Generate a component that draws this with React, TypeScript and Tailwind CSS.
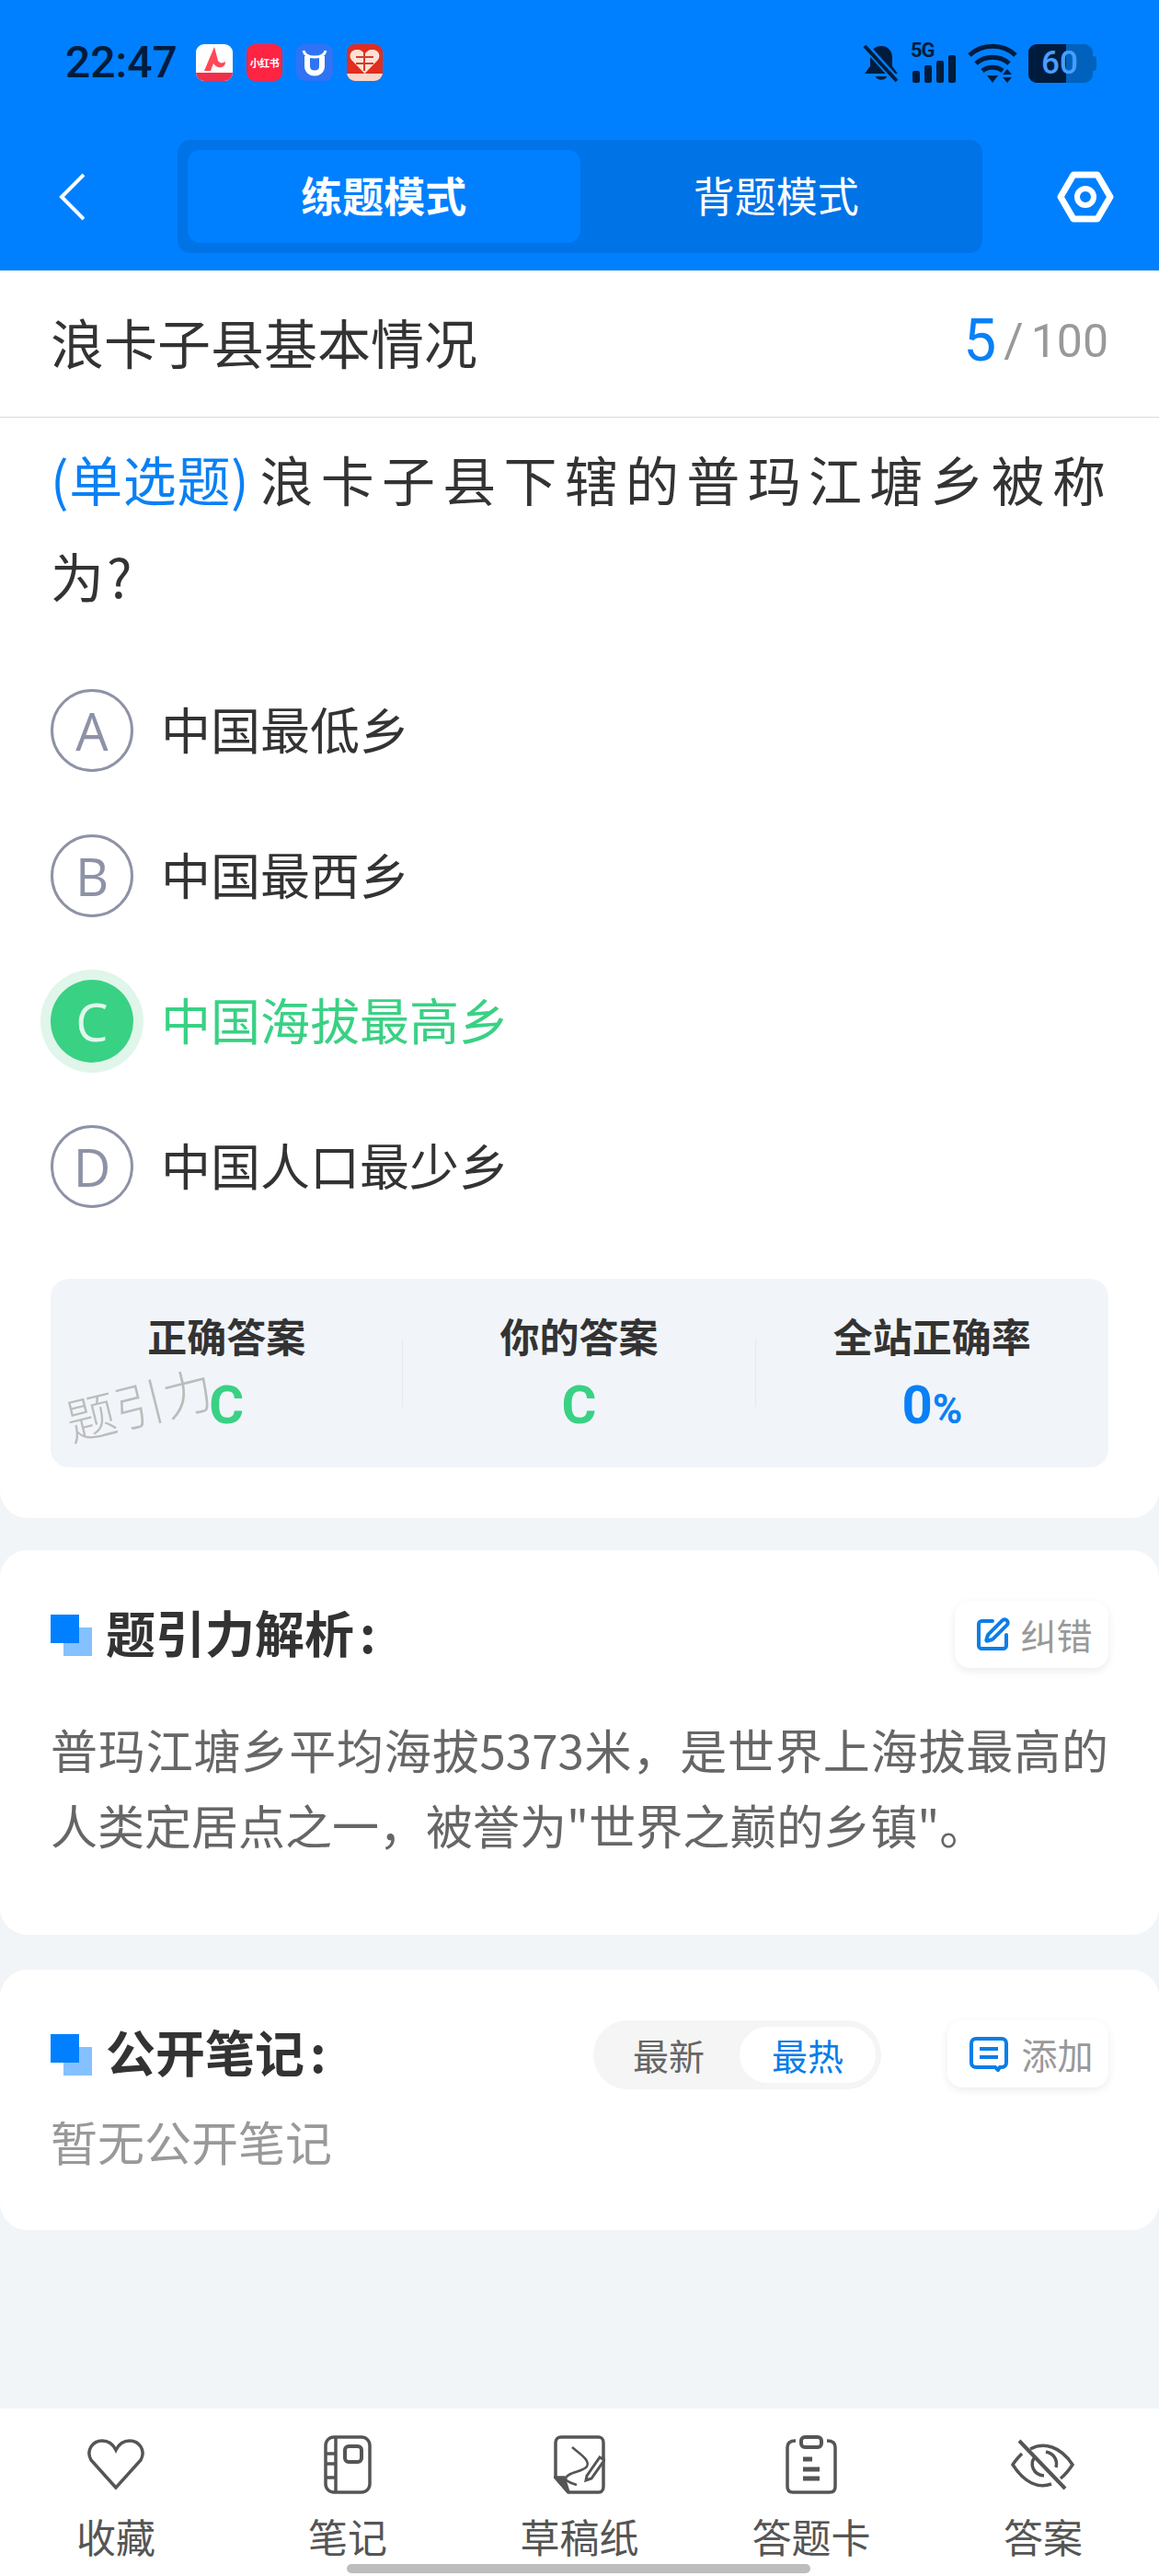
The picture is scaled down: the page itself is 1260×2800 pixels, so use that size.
import { SquarePen } from 'lucide-react';

const options = [
  { key: 'A', text: '中国最低乡' },
  { key: 'B', text: '中国最西乡' },
  { key: 'C', text: '中国海拔最高乡', correct: true },
  { key: 'D', text: '中国人口最少乡' },
];

const stats = [
  { label: '正确答案', value: 'C', color: 'text-[#39d184]' },
  { label: '你的答案', value: 'C', color: 'text-[#39d184]' },
  { label: '全站正确率', value: '0', unit: '%', color: 'text-[#0a80f5]' },
];

// full-width commas written as escapes
const analysis = '普玛江塘乡平均海拔5373米\uFF0C是世界上海拔最高的人类定居点之一\uFF0C被誉为"世界之巅的乡镇"\u3002';

function StatusIcons() {
  return (
    <div className="flex items-center">
      <svg width="40" height="44" viewBox="0 0 40 44" className="mr-[12px]">
        <path d="M20 3c-8 0-12 6-12 13v9l-6 8h36l-6-8v-9c0-7-4-13-12-13z" fill="#001c3d" />
        <path d="M14 36h12c-1 5-11 5-12 0z" fill="#001c3d" />
        <path d="M2 2l36 40" stroke="#0080ff" strokeWidth="8" />
        <path d="M2 3l35 38" stroke="#001c3d" strokeWidth="4" />
      </svg>
      <div className="relative w-[50px] h-[44px] mr-[12px]">
        <span className="absolute left-0 top-[-3px] font-['Roboto'] text-[22px] leading-[22px] font-bold tracking-[-1px] text-[#001c3d]">5G</span>
        <svg width="50" height="44" viewBox="0 0 50 44" className="absolute left-0 top-0">
          <rect x="2" y="30" width="8" height="13" rx="2" fill="#001c3d" />
          <rect x="15" y="24" width="8" height="19" rx="2" fill="#001c3d" />
          <rect x="28" y="19" width="8" height="24" rx="2" fill="#001c3d" />
          <rect x="41" y="13" width="8" height="30" rx="2" fill="#001c3d" />
        </svg>
      </div>
      <svg width="54" height="44" viewBox="0 0 54 44" className="mr-[12px]">
        <path d="M2 13c14-13 36-13 50 0" fill="none" stroke="#001c3d" strokeWidth="5" />
        <path d="M9 22c10-9 26-9 36 0" fill="none" stroke="#001c3d" strokeWidth="5" />
        <path d="M16 30c6-5 16-5 22 0" fill="none" stroke="#001c3d" strokeWidth="5" />
        <path d="M21 35h12l-6 8z" fill="#001c3d" />
        <path d="M43 28l5 6h-10zM43 43l5-6h-10z" fill="#001c3d" />
      </svg>
      <div className="flex items-center">
        <div className="relative flex h-[42px] w-[70px] overflow-hidden rounded-[9px] bg-[#0062bd]">
          <div className="h-full w-[41px] bg-[#001c3d]" />
          <span className="absolute left-[14px] top-0 font-['Roboto'] text-[35px] leading-[42px] font-medium text-[#4a9eff]">60</span>
        </div>
        <div className="h-[16px] w-[4px] rounded-r-[3px] bg-[#0062bd]" />
      </div>
    </div>
  );
}

function AppIcons() {
  return (
    <div className="flex items-center gap-[15px]">
      <div className="relative h-[40px] w-[40px] overflow-hidden rounded-[9px] bg-white">
        <svg width="40" height="40" viewBox="0 0 40 40" className="absolute left-0 top-0">
          <path d="M20 3L9 29h7l3-8c3 4 6 5 9 4 3-1 4-3 4-6-3 2-6 2-8-1L20 3z" fill="#ff4757" />
          <rect x="0" y="31" width="40" height="9" fill="#f0304a" />
        </svg>
      </div>
      <div className="flex h-[40px] w-[39px] items-center justify-center rounded-[9px] bg-[#ff2442]">
        <span className="whitespace-nowrap text-[11px] font-bold leading-none tracking-[-0.5px] text-white">小红书</span>
      </div>
      <div className="h-[40px] w-[40px] rounded-[9px] bg-[#2e74f5]">
        <svg width="40" height="40" viewBox="0 0 40 40">
          <path d="M12 13v11c0 10 16 10 16 0V13" fill="none" stroke="white" strokeWidth="6" />
          <path d="M8 7c1 5 5 7 12 7s11-2 12-7" fill="none" stroke="white" strokeWidth="3" />
        </svg>
      </div>
      <div className="h-[40px] w-[39px] overflow-hidden rounded-[9px] bg-[#e02e1f]">
        <svg width="39" height="40" viewBox="0 0 39 40">
          <path d="M19.5 32L5 17c-4-6 1-12 7-11 3 0 6 2 7.5 5C21 8 24 6 27 6c6-1 11 5 7 11z" fill="#fbe3d6" />
          <path d="M19 9v20M10 14h19M10 21h19" stroke="#d93a2b" strokeWidth="2" />
          <rect x="0" y="32" width="39" height="8" fill="#fbd5c8" />
        </svg>
      </div>
    </div>
  );
}

function SectionMark() {
  return (
    <div className="relative h-[45px] w-[45px] shrink-0">
      <div className="absolute left-[14px] top-[14px] h-[31px] w-[31px] bg-[#85c1ff]" />
      <div className="absolute left-0 top-0 h-[31px] w-[31px] bg-[#0080ff]" />
    </div>
  );
}

function NavIcon({ name }: { name: string }) {
  if (name === 'heart') {
    return (
      <svg width="64" height="56" viewBox="0 0 64 56" fill="none" stroke="#555" strokeWidth="3.5">
        <path d="M32 53L5 23C-1 12 7 2 17 2c7 0 12 4 15 10C35 6 40 2 47 2c10 0 18 10 12 21z" />
      </svg>
    );
  }
  if (name === 'note') {
    return (
      <svg width="52" height="64" viewBox="0 0 52 64" fill="none" stroke="#555" strokeWidth="3.5">
        <rect x="2" y="2" width="48" height="60" rx="9" />
        <path d="M13 2v60M2 20h11M2 31h11M2 46h11" />
        <rect x="23" y="12" width="18" height="17" rx="4" strokeWidth="4" />
      </svg>
    );
  }
  if (name === 'draft') {
    return (
      <svg width="56" height="64" viewBox="0 0 56 64" fill="none" stroke="#555" strokeWidth="3.5">
        <path d="M2 46V8c0-3 2-6 6-6h41c3 0 5 3 5 6v48c0 3-2 6-5 6H16z" />
        <path d="M2 46h9l5 16z" fill="#555" />
        <path d="M20 13c8 7 20 14 16 21-4 6-22 6-23 13 0 3 6 5 12 7" strokeWidth="2.5" />
        <path d="M36 44l14-20 5 3-14 20-6 2z" fill="#fff" strokeWidth="3" />
      </svg>
    );
  }
  if (name === 'card') {
    return (
      <svg width="56" height="64" viewBox="0 0 56 64" fill="none" stroke="#555" strokeWidth="3.5">
        <path d="M11 6C5 6 2 8 2 13v43c0 4 2 6 6 6h40c4 0 6-2 6-6V13c0-5-3-7-9-7" />
        <rect x="17" y="2" width="22" height="11" rx="4" strokeWidth="4" />
        <path d="M19 26h10M19 37h18M19 47h18" strokeWidth="5" />
      </svg>
    );
  }
  return (
    <svg width="70" height="56" viewBox="0 0 70 56" fill="none" stroke="#555" strokeWidth="3.5">
      <path d="M21 11c15-8 33-3 46 17-4 6-8 11-13 15M44 49c-14 5-29-1-42-21 3-5 7-9 10-12" />
      <path d="M26 20c-6 7-2 19 10 20M38 14c9 2 13 9 11 17" />
      <path d="M9 2l50 52" strokeWidth="4" />
    </svg>
  );
}

export default function App() {
  return (
    <div className="relative flex h-[2800px] w-[1260px] flex-col overflow-hidden bg-[#f2f5f8] font-['Noto_Sans_CJK_SC',sans-serif]">
      <header className="h-[294px] shrink-0 bg-[#0080ff]">
        <div className="flex h-[152px] items-start justify-between pl-[71px] pr-[68px] pt-[47px]">
          <div className="flex items-center">
            <span className="w-[142px] font-['Roboto'] text-[48px] leading-[42px] font-medium text-[#001c3d]">22:47</span>
            <AppIcons />
          </div>
          <StatusIcons />
        </div>
        <div className="flex h-[123px] items-center">
          <svg width="28" height="52" viewBox="0 0 28 52" fill="none" className="ml-[64px] mr-[101px]">
            <path d="M27 2L3 26l24 24" stroke="white" strokeWidth="4" />
          </svg>
          <div className="flex h-[123px] w-[875px] rounded-[14px] bg-[#0073e6] p-[11px]">
            <div className="flex flex-1 items-center justify-center rounded-[14px] bg-[#0080ff] pb-[3px] text-[45px] font-bold text-white">练题模式</div>
            <div className="flex flex-1 items-center justify-center pb-[3px] text-[45px] text-white">背题模式</div>
          </div>
          <svg width="62" height="56" viewBox="0 0 62 56" fill="none" className="ml-[81px]">
            <path d="M4 28L18 4h26l14 24-14 24H18z" stroke="white" strokeWidth="7" strokeLinejoin="round" />
            <circle cx="31" cy="28" r="9" stroke="white" strokeWidth="6" />
          </svg>
        </div>
      </header>

      <section className="shrink-0 rounded-b-[30px] bg-white pb-[55px]">
        <div className="flex h-[160px] items-center justify-between border-b border-[#d9d9d9] px-[55px] pb-[5px]">
          <span className="text-[58px] text-[#333]">浪卡子县基本情况</span>
          <div className="flex items-center font-['Roboto']">
            <span className="text-[64px] text-[#0a80f5]">5</span>
            <span className="ml-[8px] text-[52px] text-[#999]">/</span>
            <span className="ml-[8px] text-[50px] text-[#999]">100</span>
          </div>
        </div>

        <p className="px-[55px] pt-[14px] text-justify text-[58px] leading-[105px] tracking-[3px] text-[#333]">
          <span className="mr-[6px] inline-block tracking-[0.6px] text-[#0a80f5]">(单选题)</span>浪卡子县下辖的普玛江塘乡被称为?
        </p>

        <div className="px-[55px] pt-[71px]">
          {options.map(option => (
            <div key={option.key} className="flex h-[158px] items-start">
              {option.correct ? (
                <div className="flex h-[90px] w-[90px] shrink-0 items-center justify-center rounded-full bg-[#39d184] font-['Open_Sans'] text-[56px] text-[#e0f8ec] shadow-[0_0_0_11px_#e0f6ea]">
                  {option.key}
                </div>
              ) : (
                <div className="flex h-[90px] w-[90px] shrink-0 items-center justify-center rounded-full border-[3px] border-[#8e92a6] font-['Open_Sans'] text-[56px] text-[#8e92a6]">
                  {option.key}
                </div>
              )}
              <span
                className={
                  option.correct
                    ? 'ml-[30px] text-[54px] leading-[86px] text-[#39d184]'
                    : 'ml-[30px] text-[54px] leading-[86px] text-[#333]'
                }
              >
                {option.text}
              </span>
            </div>
          ))}
        </div>

        <div className="relative mx-[55px] mt-[9px] flex h-[205px] rounded-[20px] bg-[#f1f5f9]">
          {stats.map((stat, i) => (
            <div key={stat.label} className="flex flex-1 items-start">
              <div className="flex flex-1 flex-col items-center pt-[31px]">
                <span className="text-[43px] leading-[60px] font-bold text-[#333]">{stat.label}</span>
                <span className={`mt-[13px] font-['Roboto'] text-[58px] leading-[66px] font-bold ${stat.color}`}>
                  {stat.value}
                  {stat.unit && <span className="text-[44px]">{stat.unit}</span>}
                </span>
              </div>
              {i < 2 && <div className="mt-[65px] h-[74px] w-px bg-[#e6e9ed]" />}
            </div>
          ))}
          <span className="absolute left-[15px] top-[108px] -rotate-[14deg] text-[54px] font-light leading-none text-[#bcbcbc]">题引力</span>
        </div>
      </section>

      <section className="mt-[35px] h-[418px] shrink-0 rounded-[30px] bg-white px-[55px] pt-[55px]">
        <div className="flex items-start justify-between">
          <div className="mt-[15px] flex items-start">
            <SectionMark />
            <span className="ml-[15px] mt-[-21px] text-[54px] leading-[80px] font-bold text-[#333]">题引力解析<span className="ml-[6px]">:</span></span>
          </div>
          <div className="flex h-[73px] w-[167px] items-center justify-center gap-[10px] rounded-[16px] bg-white pl-[4px] shadow-[0_3px_10px_rgba(0,0,0,0.08)]">
            <SquarePen size={40} color="#0a7de8" strokeWidth={2.4} />
            <span className="text-[39px] text-[#999]">纠错</span>
          </div>
        </div>
        <p className="mt-[46px] text-justify text-[51px] leading-[82px] text-[#666]">{analysis}</p>
      </section>

      <section className="mt-[38px] h-[283px] shrink-0 rounded-[30px] bg-white px-[55px] pt-[55px]">
        <div className="flex items-start">
          <div className="mt-[15px] flex items-start">
            <SectionMark />
            <span className="ml-[15px] mt-[-21px] text-[54px] leading-[80px] font-bold text-[#333]">公开笔记<span className="ml-[6px]">:</span></span>
          </div>
          <div className="ml-auto flex h-[75px] w-[313px] items-center justify-between rounded-full bg-[#f5f5f5] py-[7px] pl-[43px] pr-[6px]">
            <span className="text-[39px] text-[#666]">最新</span>
            <span className="flex h-[61px] w-[148px] items-center justify-center rounded-full bg-white text-[39px] text-[#0a7de8]">最热</span>
          </div>
          <div className="ml-[72px] flex h-[73px] w-[175px] items-center justify-center gap-[14px] rounded-[16px] bg-white pl-[8px] shadow-[0_3px_10px_rgba(0,0,0,0.08)]">
            <svg width="42" height="38" viewBox="0 0 42 38" fill="none" stroke="#0a7de8" strokeWidth="4">
              <path d="M7 2h28c3 0 5 2 5 5v21c0 3-2 5-5 5h-2l-2 3-3-3H7c-3 0-5-2-5-5V7c0-3 2-5 5-5z" />
              <path d="M11 13h20M11 22h20" />
            </svg>
            <span className="text-[39px] text-[#999]">添加</span>
          </div>
        </div>
        <p className="mt-[20px] text-[51px] leading-[72px] text-[#999]">暂无公开笔记</p>
      </section>

      <nav className="absolute bottom-0 left-0 flex h-[182px] w-[1260px] bg-white">
        {[
          { icon: 'heart', label: '收藏' },
          { icon: 'note', label: '笔记' },
          { icon: 'draft', label: '草稿纸' },
          { icon: 'card', label: '答题卡' },
          { icon: 'eye', label: '答案' },
        ].map(item => (
          <div key={item.label} className="flex flex-1 flex-col items-center">
            <div className="flex h-[64px] mt-[29px] items-center justify-center">
              <NavIcon name={item.icon} />
            </div>
            <span className="mt-[15px] text-[43px] leading-[60px] text-[#555]">{item.label}</span>
          </div>
        ))}
      </nav>
      <div className="absolute bottom-[3px] left-[377px] h-[10px] w-[504px] rounded-full bg-[#bdbdbd]" />
    </div>
  );
}
